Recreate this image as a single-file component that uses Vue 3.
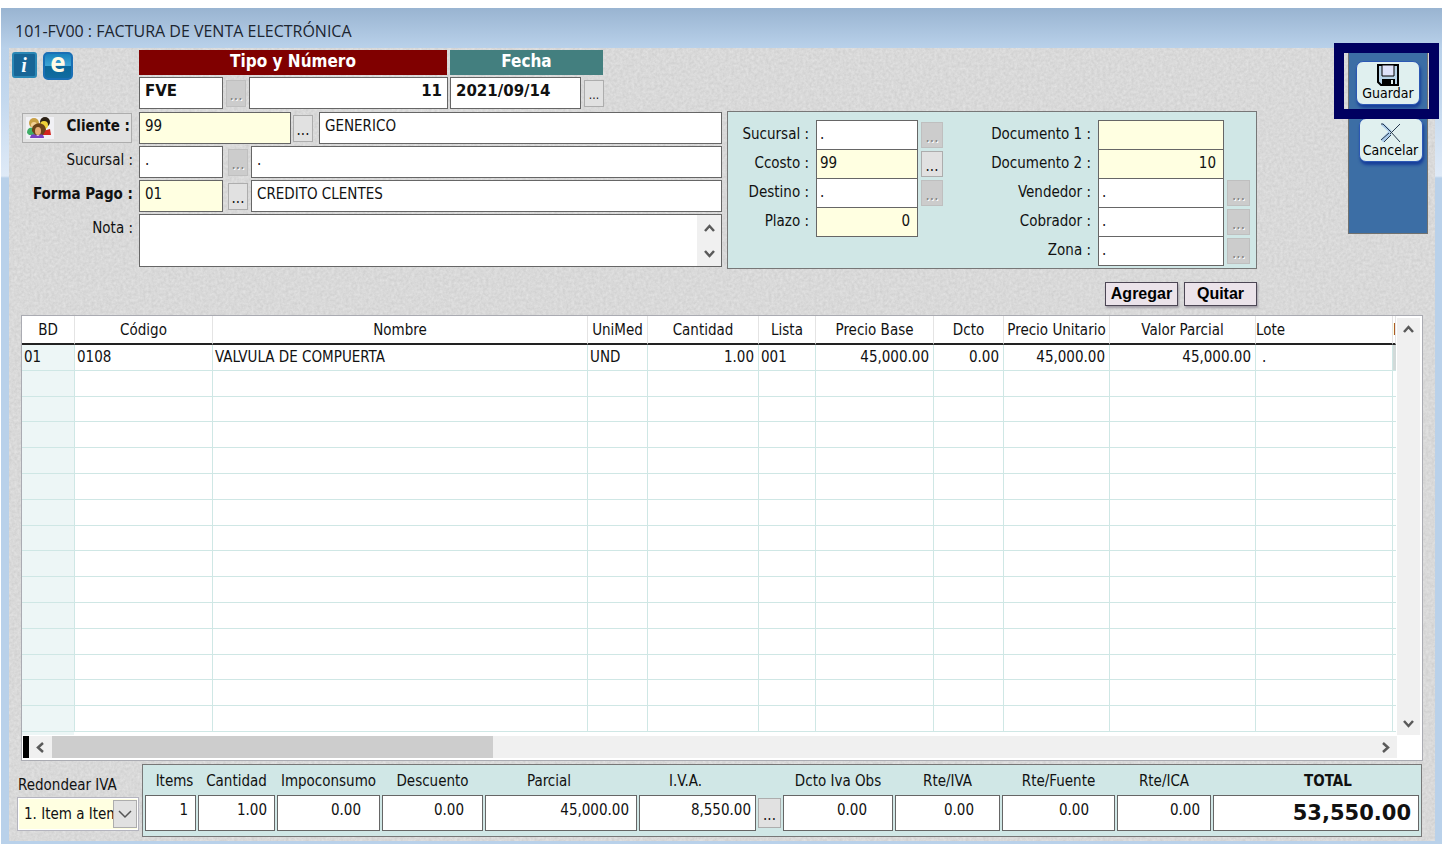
<template>
  <div class="window">
    <header class="title-bar">101-FV00 : FACTURA DE VENTA ELECTRÓNICA</header>

    <main class="client">
      <svg class="grain" aria-hidden="true">
        <filter id="grain-filter" x="0" y="0" width="100%" height="100%" color-interpolation-filters="sRGB">
          <feTurbulence type="fractalNoise" baseFrequency="0.35" numOctaves="3" seed="4" />
          <feColorMatrix values="0.1 0 0 0 0.8  0.1 0 0 0 0.8  0.1 0 0 0 0.8  0 0 0 0 1" />
        </filter>
        <rect width="100%" height="100%" filter="url(#grain-filter)" />
      </svg>

      <section class="upper">
        <form class="form" @submit.prevent>
          <div class="doc-head">
            <div class="doc-icons">
              <button type="button" class="icon-btn" aria-label="Información">
                <svg width="25" height="26" viewBox="0 0 25 26">
                  <rect x="1" y="1" width="23" height="24" rx="2" fill="#176596" stroke="#2a87b5" stroke-width="2" />
                  <text x="12" y="20" class="icon-i">i</text>
                </svg>
              </button>
              <button type="button" class="icon-btn" aria-label="Documento electrónico">
                <svg width="30" height="28" viewBox="0 0 30 28" overflow="visible">
                  <defs>
                    <linearGradient id="e-fill" x1="0" y1="0" x2="0" y2="1">
                      <stop offset="0" stop-color="#167fba" />
                      <stop offset="0.48" stop-color="#3da4d6" />
                      <stop offset="0.52" stop-color="#096698" />
                      <stop offset="1" stop-color="#126da1" />
                    </linearGradient>
                  </defs>
                  <rect x="1" y="1" width="28" height="26" rx="4" fill="url(#e-fill)" stroke="#1a6fb5" stroke-width="2" />
                  <text x="15" y="20" class="icon-e">e</text>
                </svg>
              </button>
            </div>

            <div class="doc-group doc-number">
              <div class="caption caption-red">Tipo y Número</div>
              <div class="field-line">
                <input v-model="doc.tipo" class="box strong code" aria-label="Tipo" />
                <button type="button" class="dots" disabled>...</button>
                <input v-model="doc.numero" class="box strong right grow" aria-label="Número" />
              </div>
            </div>
            <div class="doc-group">
              <div class="caption caption-teal">Fecha</div>
              <div class="field-line">
                <input v-model="doc.fecha" class="box strong date" aria-label="Fecha" />
                <button type="button" class="dots small">...</button>
              </div>
            </div>
          </div>

          <div class="row">
            <div class="row-label">
              <button type="button" class="client-btn">
                <svg width="28" height="22" viewBox="0 0 28 22" aria-hidden="true">
                  <rect width="28" height="22" fill="#f1f1f5" />
                  <circle cx="8" cy="6" r="5" fill="#c9a046" />
                  <circle cx="8" cy="8" r="3" fill="#f3cf93" />
                  <circle cx="19" cy="5" r="5" fill="#2b2114" />
                  <circle cx="18" cy="8" r="4" fill="#efd23a" />
                  <path d="M1 16c0-5 3-6 6-5l4 7H3z" fill="#3fae68" />
                  <path d="M17 14l7-2 1 6h-8z" fill="#d3231d" />
                  <path d="M6 14c-1-9 13-11 14-1l-3 5H9z" fill="#6b4219" />
                  <ellipse cx="12" cy="14" rx="3" ry="4" fill="#e7ad75" />
                  <path d="M4 21c1-5 4-4 8-2 4-3 6-1 6 2z" fill="#7a3ec0" />
                </svg>
                <span>Cliente :</span>
              </button>
            </div>
            <input v-model="form.cliente" class="box yellow client-code" aria-label="Cliente" />
            <button type="button" class="dots">...</button>
            <input v-model="form.clienteNombre" class="box grow client-name" aria-label="Nombre del cliente" />
          </div>

          <div class="row">
            <label class="row-label" for="sucursal">Sucursal :</label>
            <input id="sucursal" v-model="form.sucursal" class="box code" />
            <button type="button" class="dots spaced" disabled>...</button>
            <input v-model="form.sucursalNombre" class="box grow" aria-label="Nombre de la sucursal" />
          </div>

          <div class="row">
            <label class="row-label bold" for="forma-pago">Forma Pago :</label>
            <input id="forma-pago" v-model="form.formaPago" class="box yellow code" />
            <button type="button" class="dots spaced">...</button>
            <input v-model="form.formaPagoNombre" class="box grow" aria-label="Nombre de la forma de pago" />
          </div>

          <div class="row row-note">
            <label class="row-label" for="nota">Nota :</label>
            <div class="note">
              <textarea id="nota" v-model="form.nota"></textarea>
              <div class="note-scroll">
                <svg width="13" height="9" viewBox="0 0 13 9"><path d="M2 7l4.500-5 4.500 5" /></svg>
                <svg width="13" height="9" viewBox="0 0 13 9"><path d="M2 2l4.500 5 4.500-5" /></svg>
              </div>
            </div>
          </div>
        </form>

        <div class="side">
          <div class="panel">
            <div v-for="(column, i) in panelColumns" :key="i" :class="['panel-col', 'panel-col-' + (i + 1)]">
              <div v-for="field in column" :key="field.id" class="panel-row">
                <label :for="field.id">{{ field.label }} :</label>
                <input :id="field.id" v-model="field.value" :class="['box', { yellow: field.yellow, right: field.numeric }]" />
                <button v-if="field.lookup" type="button" class="dots" :disabled="field.disabled">...</button>
              </div>
            </div>
          </div>
          <div class="line-actions">
            <button type="button" @click="addLine">Agregar</button>
            <button type="button" @click="removeLine">Quitar</button>
          </div>
        </div>

        <aside class="toolbar">
          <button type="button" class="tool tool-save">
            <svg width="22" height="22" viewBox="0 0 22 22">
              <path d="M1 1h20v20H4l-3-3z" fill="#b9d4e8" stroke="#000" stroke-width="2" />
              <path d="M5 1h12v11H5z" fill="#dfe3fa" stroke="#000" />
              <path d="M5 15h13v6H5z" fill="#000" />
              <path d="M14 16h2v4h-2z" fill="#e0f0ee" />
            </svg>
            Guardar
          </button>
          <button type="button" class="tool tool-cancel">
            <svg width="22" height="20" viewBox="0 0 22 20">
              <path d="M2 1l9 8" fill="none" stroke="#a9c9e8" stroke-width="3" />
              <path d="M10 10l-8 8" fill="none" stroke="#a9c9e8" stroke-width="4" />
              <path d="M1 1l2 0 8 8 9 10M20 1L10 11M1 17l8-7M4 19l7-7" fill="none" stroke="#26384c" />
            </svg>
            Cancelar
          </button>
          <div class="highlight"></div>
        </aside>
      </section>

      <section class="sheet">
        <div class="sheet-main">
          <div class="sheet-view">
            <table>
              <colgroup>
                <col v-for="col in columns" :key="col.key" :class="'col-' + col.key" />
              </colgroup>
              <thead>
                <tr>
                  <th v-for="col in columns" :key="col.key" :class="'head-' + col.key">{{ col.label }}</th>
                </tr>
              </thead>
              <tbody>
                <tr v-for="(line, i) in visibleLines" :key="i">
                  <td v-for="col in columns" :key="col.key" :class="['cell-' + col.key, { right: col.numeric, filled: line.bd }]">
                    {{ line[col.key] || '\u00a0' }}
                  </td>
                </tr>
              </tbody>
            </table>
          </div>
          <div class="v-scroll">
            <button type="button" aria-label="Subir">
              <svg width="13" height="9" viewBox="0 0 13 9"><path d="M2 7l4.500-5 4.500 5" /></svg>
            </button>
            <button type="button" aria-label="Bajar">
              <svg width="13" height="9" viewBox="0 0 13 9"><path d="M2 2l4.500 5 4.500-5" /></svg>
            </button>
          </div>
        </div>
        <div class="h-scroll">
          <span class="split"></span>
          <button type="button" aria-label="Izquierda">
            <svg width="9" height="13" viewBox="0 0 9 13"><path d="M7 2L2 6.500l5 4.500" /></svg>
          </button>
          <div class="track"><div class="thumb"></div></div>
          <button type="button" aria-label="Derecha">
            <svg width="9" height="13" viewBox="0 0 9 13"><path d="M2 2l5 4.500L2 11" /></svg>
          </button>
        </div>
      </section>

      <footer class="footer">
        <div class="rounding">
          <label for="redondeo">Redondear IVA</label>
          <div class="combo">
            <select id="redondeo" v-model="redondeo">
              <option value="1">1. Item a Item</option>
              <option value="2">2. Total</option>
            </select>
            <span class="combo-arrow">
              <svg width="14" height="9" viewBox="0 0 14 9"><path d="M1 1l6 6 6-6" /></svg>
            </span>
          </div>
        </div>

        <div class="totals">
          <template v-for="total in totals" :key="total.id">
            <div :class="['total', 'total-' + total.id]">
              <label :for="'total-' + total.id">{{ total.label }}</label>
              <input :id="'total-' + total.id" class="box right" :value="total.value" readonly />
            </div>
            <button v-if="total.id === 'iva'" type="button" class="dots total-dots">...</button>
          </template>
        </div>
      </footer>
    </main>
  </div>
</template>

<script setup>
import { ref, reactive, computed } from 'vue'

const VISIBLE_ROWS = 15

const doc = reactive({ tipo: 'FVE', numero: '11', fecha: '2021/09/14' })

const form = reactive({
  cliente: '99',
  clienteNombre: 'GENERICO',
  sucursal: '.',
  sucursalNombre: '.',
  formaPago: '01',
  formaPagoNombre: 'CREDITO CLENTES',
  nota: ''
})

const panelColumns = reactive([
  [
    { id: 'p-sucursal', label: 'Sucursal', value: '.', lookup: true, disabled: true },
    { id: 'p-ccosto', label: 'Ccosto', value: '99', yellow: true, lookup: true },
    { id: 'p-destino', label: 'Destino', value: '.', lookup: true, disabled: true },
    { id: 'p-plazo', label: 'Plazo', value: '0', yellow: true, numeric: true }
  ],
  [
    { id: 'p-doc1', label: 'Documento 1', value: '', yellow: true },
    { id: 'p-doc2', label: 'Documento 2', value: '10', yellow: true, numeric: true },
    { id: 'p-vendedor', label: 'Vendedor', value: '.', lookup: true, disabled: true },
    { id: 'p-cobrador', label: 'Cobrador', value: '.', lookup: true, disabled: true },
    { id: 'p-zona', label: 'Zona', value: '.', lookup: true, disabled: true }
  ]
])

const columns = [
  { key: 'bd', label: 'BD' },
  { key: 'codigo', label: 'Código' },
  { key: 'nombre', label: 'Nombre' },
  { key: 'unimed', label: 'UniMed' },
  { key: 'cantidad', label: 'Cantidad', numeric: true },
  { key: 'lista', label: 'Lista' },
  { key: 'base', label: 'Precio Base', numeric: true },
  { key: 'dcto', label: 'Dcto', numeric: true },
  { key: 'unitario', label: 'Precio Unitario', numeric: true },
  { key: 'parcial', label: 'Valor Parcial', numeric: true },
  { key: 'lote', label: 'Lote' },
  { key: 'next', label: 'D' }
]

const lines = ref([
  {
    bd: '01',
    codigo: '0108',
    nombre: 'VALVULA DE COMPUERTA',
    unimed: 'UND',
    cantidad: '1.00',
    lista: '001',
    base: '45,000.00',
    dcto: '0.00',
    unitario: '45,000.00',
    parcial: '45,000.00',
    lote: '.'
  }
])

// The grid always shows a full page of rows, empty ones included
const visibleLines = computed(() =>
  Array.from({ length: Math.max(VISIBLE_ROWS, lines.value.length) }, (_, i) => lines.value[i] || {})
)

const addLine = () => {
  lines.value.push({ bd: '01', lote: '.' })
}

const removeLine = () => {
  lines.value.pop()
}

const redondeo = ref('1')

const totals = [
  { id: 'items', label: 'Items', value: '1' },
  { id: 'cantidad', label: 'Cantidad', value: '1.00' },
  { id: 'impoconsumo', label: 'Impoconsumo', value: '0.00' },
  { id: 'descuento', label: 'Descuento', value: '0.00' },
  { id: 'parcial', label: 'Parcial', value: '45,000.00' },
  { id: 'iva', label: 'I.V.A.', value: '8,550.00' },
  { id: 'dctoiva', label: 'Dcto Iva Obs', value: '0.00' },
  { id: 'rteiva', label: 'Rte/IVA', value: '0.00' },
  { id: 'rtefuente', label: 'Rte/Fuente', value: '0.00' },
  { id: 'rteica', label: 'Rte/ICA', value: '0.00' },
  { id: 'total', label: 'TOTAL', value: '53,550.00' }
]
</script>

<style>
body {
  background: #fff;
}
</style>

<style scoped>
* {
  box-sizing: border-box;
}

.window {
  display: flex;
  flex-direction: column;
  min-height: 100vh;
  padding: 0 7px 3px 8px;
  border: solid #fff;
  border-width: 8px 6px 0 1px;
  background: linear-gradient(#99b4d1 0, #b9d1ea 40px, #c3d8ee 90px, #dfeaf7 168px, #b9d1ea 170px);
  background-clip: padding-box;
  font-family: "DejaVu Sans Condensed", "Noto Sans", sans-serif;
  font-size: 15px;
  color: #111;
}

button,
input,
select,
textarea {
  font: inherit;
  color: inherit;
  margin: 0;
}

.title-bar {
  height: 40px;
  padding: 0 6px;
  line-height: 46px;
  font-family: "Open Sans", sans-serif;
  font-size: 16px;
  color: #1c2530;
}

.client {
  position: relative;
  flex: 1;
  display: flex;
  flex-direction: column;
  background: #d9d9d9;
}

.client > section,
.client > footer {
  position: relative;
}

.grain {
  position: absolute;
  width: 100%;
  height: 100%;
}

.upper {
  display: grid;
  grid-template-columns: minmax(0, 713fr) minmax(0, 616fr) 80px;
  column-gap: 5px;
  padding-right: 7px;
}

.form {
  display: flex;
  flex-direction: column;
  gap: 2px;
  padding-top: 2px;
}

.doc-head {
  display: flex;
  gap: 2px;
  margin-bottom: 1px;
}

.doc-icons {
  display: flex;
  align-items: flex-start;
  gap: 6px;
  width: 128px;
  padding: 2px 3px;
}

.icon-btn {
  display: flex;
  padding: 0;
  border: 0;
  background: none;
}

.icon-i {
  font: italic bold 20px "Liberation Serif", serif;
  text-anchor: middle;
  fill: #f4fbff;
}

.icon-e {
  font: bold 26px "Open Sans", sans-serif;
  text-anchor: middle;
  fill: #fffbe6;
}

.doc-group {
  display: flex;
  flex-direction: column;
  gap: 2px;
}

.doc-number {
  width: 309px;
}

.caption {
  height: 25px;
  margin-right: 1px;
  line-height: 22px;
  font-size: 17px;
  font-weight: bold;
  text-align: center;
  color: #fff;
}

.caption-red {
  background: #800000;
}

.caption-teal {
  background: #437f7f;
}

.field-line {
  display: flex;
  align-items: center;
  gap: 3px;
  height: 32px;
}

.box {
  height: 32px;
  min-width: 0;
  padding: 0 5px 4px;
  border: 1px solid #666;
  border-radius: 0;
  background: #fff;
  outline: none;
}

.bold {
  font-weight: bold;
}

.strong {
  font-family: "DejaVu Sans", sans-serif;
  font-weight: bold;
}

.right {
  text-align: right;
}

.grow {
  flex: 1;
}

.yellow {
  background: #ffffe1;
}

.code {
  width: 84px;
}

.date {
  width: 131px;
}

.dots {
  flex: none;
  width: 20px;
  height: 27px;
  padding: 4px 0 0;
  border: 1px solid #adadad;
  background: #e1e1e1;
  line-height: 20px;
  text-align: center;
}

.dots:disabled {
  border-color: #bfbfbf;
  background: #ccc;
  color: #838383;
  text-shadow: 1px 1px #fff;
}

.dots.small {
  font-size: 12px;
}

.row {
  display: flex;
  align-items: center;
  height: 32px;
}

.row-label {
  flex: none;
  width: 130px;
  padding: 0 6px 4px 0;
  text-align: right;
}

.client-btn {
  display: flex;
  align-items: center;
  justify-content: space-between;
  width: 110px;
  height: 30px;
  margin: 4px 0 0 13px;
  padding: 0 1px 4px 3px;
  border: 1px solid #adadad;
  background: #e1e1e1;
  font-weight: bold;
}

.client-btn svg {
  margin-top: 3px;
}

.client-code {
  width: 152px;
  margin-right: 2px;
}

.client-name {
  margin-left: 6px;
}

.spaced {
  margin: 0 3px 0 5px;
}

.row-note {
  align-items: flex-start;
  height: 53px;
}

.row-note .row-label {
  padding-top: 5px;
}

.note {
  flex: 1;
  display: flex;
  height: 53px;
  border: 1px solid #666;
  background: #fff;
}

.note textarea {
  flex: 1;
  padding: 4px 5px;
  border: 0;
  background: none;
  resize: none;
  outline: none;
}

.note-scroll {
  display: flex;
  flex-direction: column;
  align-items: center;
  justify-content: space-between;
  width: 24px;
  padding: 9px 0 8px;
  background: #f0f0f0;
}

.note-scroll path,
.v-scroll path,
.h-scroll path {
  fill: none;
  stroke: #5a5a5a;
  stroke-width: 2.5;
}

.side {
  padding: 63px 86px 0 0;
}

.panel {
  display: flex;
  justify-content: space-between;
  height: 158px;
  padding: 8px 6px 0 8px;
  border: 1px solid #777;
  background: #d0e7e6;
}

.panel-row {
  display: grid;
  column-gap: 3px;
  height: 29px;
}

.panel-col-1 .panel-row {
  grid-template-columns: 77px 102px 22px;
}

.panel-col-2 .panel-row {
  grid-template-columns: 110px 126px 23px;
}

.panel-row label {
  padding-right: 4px;
  line-height: 29px;
  text-align: right;
  white-space: nowrap;
}

.panel-row .box {
  height: 30px;
  padding: 0 5px 2px 3px;
}

.panel-row .right {
  padding-right: 7px;
}

.panel-row .dots {
  width: auto;
  height: 26px;
  margin-top: 2px;
}

.line-actions {
  display: flex;
  justify-content: flex-end;
  gap: 6px;
  padding: 13px 0 9px;
}

.line-actions button {
  width: 73px;
  height: 24px;
  padding: 0;
  border: 1px solid #4c4654;
  background: #ebe3ea;
  box-shadow: 1px 2px 2px #a39fa8;
  font-family: "Liberation Sans", sans-serif;
  font-size: 16px;
  font-weight: bold;
  line-height: 20px;
  color: #000;
}

.toolbar {
  position: relative;
  align-self: start;
  display: flex;
  flex-direction: column;
  align-items: center;
  gap: 13px;
  width: 80px;
  height: 186px;
  padding-top: 13px;
  border: 1px solid #70716f;
  border-top: 0;
  background: #3c6ea5;
}

.tool {
  display: flex;
  flex-direction: column;
  align-items: center;
  justify-content: flex-end;
  width: 64px;
  height: 44px;
  padding: 0 0 3px;
  border: 1px solid #2c58b4;
  border-radius: 7px;
  background: #e0f0ef;
  box-shadow: 1px 3px 3px #173f9a;
  font-size: 14px;
  line-height: 15px;
  color: #000;
}

.tool-cancel {
  margin-left: 5px;
}

.highlight {
  position: absolute;
  top: -5px;
  left: -15px;
  width: 105px;
  height: 76px;
  border: 10px solid #000060;
  pointer-events: none;
}

.sheet {
  flex: 1;
  display: flex;
  flex-direction: column;
  margin: 0 12px;
  border: 1px solid #aaabb2;
  background: #fff;
}

.sheet-main {
  flex: 1;
  display: flex;
}

.sheet-view {
  flex: 1;
  display: flex;
  min-width: 0;
  overflow: hidden;
  background: linear-gradient(90deg, #edf6f6 52px, #fff 52px);
}

table {
  width: 100%;
  margin-bottom: 3px;
  border-collapse: separate;
  border-spacing: 0;
  table-layout: fixed;
}

.col-bd { width: 53px; }
.col-codigo { width: 138px; }
.col-unimed { width: 60px; }
.col-cantidad { width: 111px; }
.col-lista { width: 57px; }
.col-base { width: 118px; }
.col-dcto { width: 70px; }
.col-unitario { width: 106px; }
.col-parcial { width: 146px; }
.col-lote { width: 137px; }
.col-next { width: 3px; }

th {
  height: 29px;
  padding: 0;
  border-right: 1px solid #e4e4e4;
  border-bottom: 2px solid #222;
  background: #fff;
  font-weight: normal;
  white-space: nowrap;
  overflow: hidden;
}

.head-lote {
  text-align: left;
}

td {
  padding: 0 4px 0 2px;
  border-right: 1px solid #cfe7e5;
  border-bottom: 1px solid #cfe7e5;
  line-height: 20px;
  white-space: nowrap;
  overflow: hidden;
}

td.cell-next {
  padding: 0;
  border-right: 0;
}

.cell-next.filled {
  background: #d2dad9;
}

.cell-lote {
  padding-left: 6px;
}

.v-scroll {
  display: flex;
  flex-direction: column;
  justify-content: space-between;
  width: 23px;
  margin: 2px 2px 0 1px;
  background: #f0f0f0;
}

.v-scroll button,
.h-scroll button {
  display: flex;
  align-items: center;
  justify-content: center;
  width: 23px;
  height: 23px;
  padding: 0;
  border: 0;
  background: none;
}

.h-scroll {
  display: flex;
  height: 22px;
  margin: 1px 25px 2px 1px;
  background: #f0f0f0;
}

.split {
  width: 6px;
  background: #000;
}

.track {
  flex: 1;
}

.thumb {
  width: calc(100% / 3);
  height: 22px;
  background: #cdcdcd;
}

.footer {
  display: flex;
  gap: 3px;
  padding: 3px 13px 4px 8px;
}

.rounding {
  width: 122px;
}

.rounding label {
  display: block;
  height: 33px;
  padding-left: 1px;
  line-height: 42px;
}

.combo {
  position: relative;
}

.combo select {
  display: block;
  width: 100%;
  height: 34px;
  padding: 0 25px 0 6px;
  border: 1px solid #b4b4be;
  border-radius: 0;
  background: #ffffe1;
  box-shadow: inset 0 0 0 1px #fff;
  appearance: none;
  outline: none;
}

.combo-arrow {
  position: absolute;
  top: 3px;
  right: 2px;
  display: flex;
  align-items: center;
  justify-content: center;
  width: 24px;
  height: 28px;
  border: 1px solid #adadad;
  background: #e1e1e1;
  pointer-events: none;
}

.combo-arrow path {
  fill: none;
  stroke: #555;
  stroke-width: 1.5;
}

.totals {
  flex: 1;
  display: grid;
  grid-template-columns: 51fr 77fr 103fr 101fr 152fr 117fr 23px 110fr 105fr 113fr 94fr 206fr;
  column-gap: 2px;
  padding: 0 2px 5px;
  border: 1px solid #777;
  background: #d0e7e6;
}

.total {
  display: flex;
  flex-direction: column;
  min-width: 0;
}

.total label {
  height: 30px;
  line-height: 32px;
  text-align: center;
  white-space: nowrap;
}

.total .box {
  width: 100%;
  height: 36px;
  padding: 0 7px 6px;
}

.total-items label {
  padding-left: 8px;
}

.total-parcial label,
.total-iva label {
  padding-right: 24px;
}

.total-iva .box {
  padding-right: 4px;
}

.total-impoconsumo .box,
.total-descuento .box {
  padding-right: 18px;
}

.total-dctoiva .box,
.total-rteiva .box,
.total-rtefuente .box {
  padding-right: 25px;
}

.total-rteica .box {
  padding-right: 10px;
}

.total-total label {
  padding-left: 24px;
  font-weight: bold;
}

.total-total .box {
  padding-bottom: 0;
  font-family: "DejaVu Sans", sans-serif;
  font-size: 21px;
  font-weight: bold;
}

.total-dots {
  width: auto;
  height: 30px;
  margin-top: 33px;
}
</style>
